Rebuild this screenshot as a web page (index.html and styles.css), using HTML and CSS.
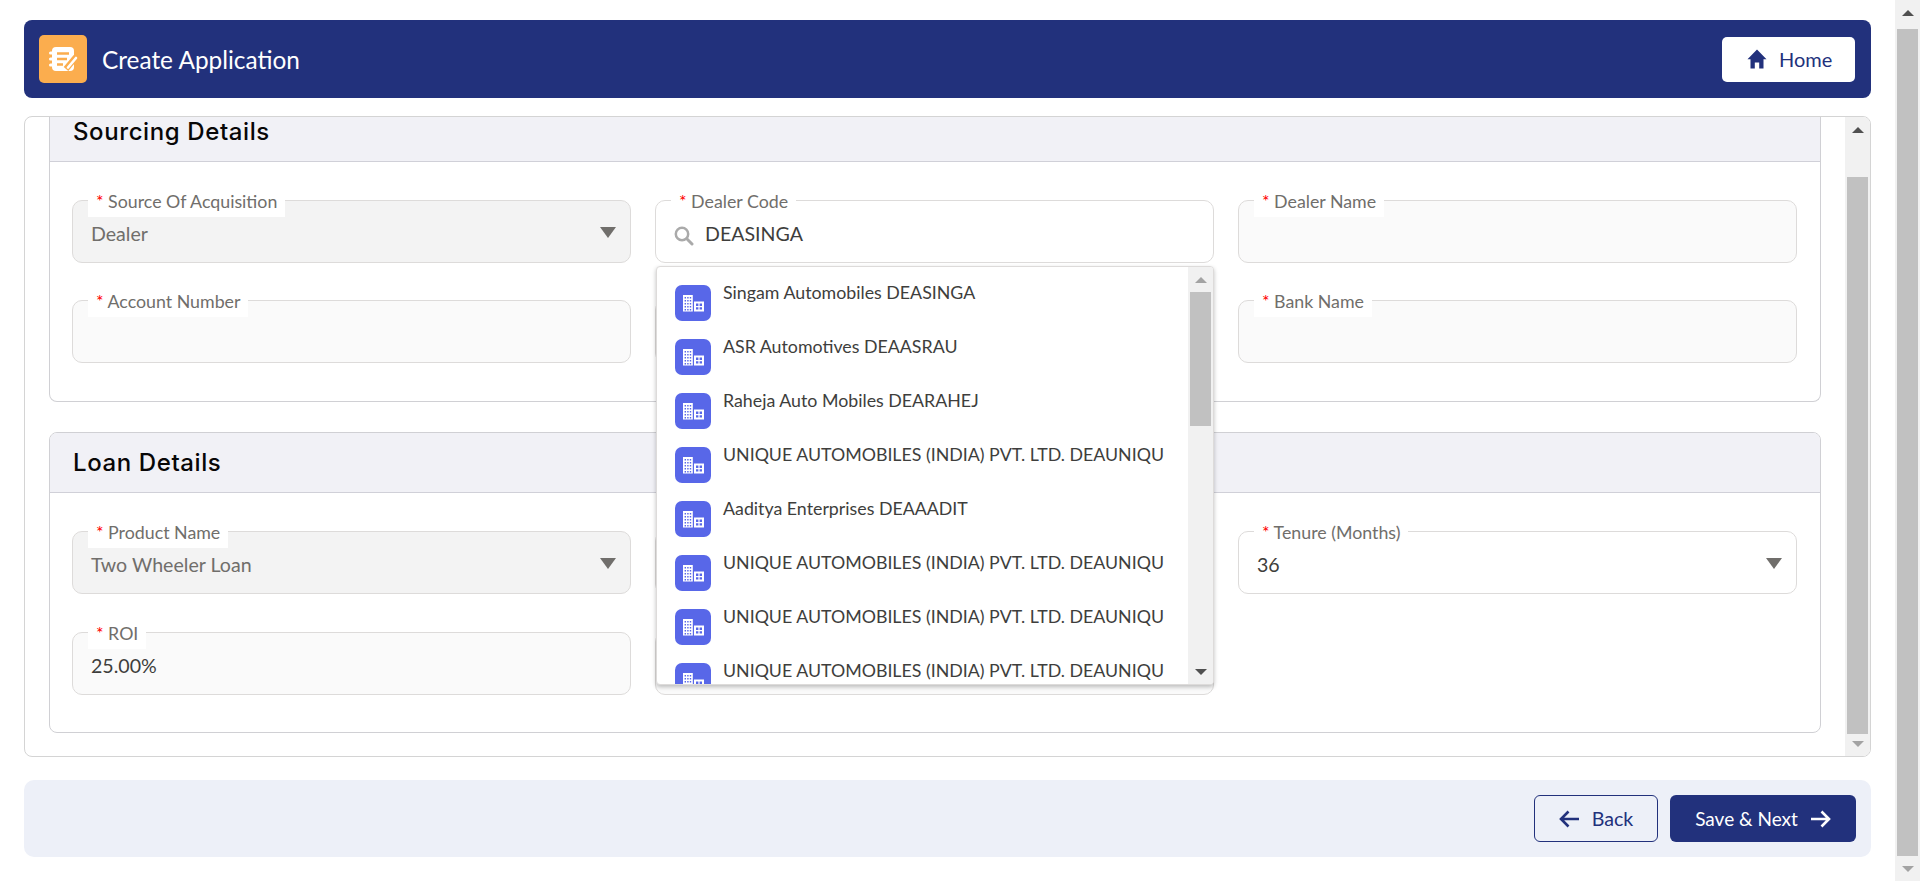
FILE: index.html
```html
<html lang="en">
<head>
	<meta charset="UTF-8">
	<title>Create Application</title>
	<link rel="stylesheet" href="styles.css">
</head>
<body>
	<svg class="defs" width="0" height="0">
		<symbol id="building" viewBox="0 0 36 36">
			<path fill="#fff" d="M8 10h9.800v16.600H8zM19 16.600h10v10H19z"/>
			<g fill="#5867e8">
				<path d="M9.600 12h1.400v1.400H9.600zM12.200 12h1.400v1.400h-1.400zM14.800 12h1.400v1.400h-1.400zM9.600 15h1.400v1.400H9.600zM12.200 15h1.400v1.400h-1.400zM14.800 15h1.400v1.400h-1.400zM9.600 18h1.400v1.400H9.600zM12.200 18h1.400v1.400h-1.400zM14.800 18h1.400v1.400h-1.400zM9.600 21h1.400v1.400H9.600zM12.200 21h1.400v1.400h-1.400zM14.800 21h1.400v1.400h-1.400zM9.600 24h1.400v1.400H9.600zM12.200 24h1.400v1.400h-1.400zM14.800 24h1.400v1.400h-1.400z"/>
				<path d="M21 18.600h2.400V21H21zM24.600 18.600H27V21h-2.400zM21 22.200h2.400v2.400H21zM24.600 22.200H27v2.400h-2.400z"/>
			</g>
		</symbol>
	</svg>

	<div class="page">
		<div class="topBar">
			<div class="titleWrap">
				<span class="appIcon">
					<svg width="48" height="48" viewBox="0 0 48 48">
						<rect x="13" y="12" width="22" height="24" rx="4" fill="#fff"/>
						<path stroke="#fff" stroke-width="3" stroke-linecap="round" d="M11.500 18h4M11.500 24h4M11.500 30h4"/>
						<path stroke="#fbad4e" stroke-width="2.400" d="M18 18.500h12M18 24h10M18 29.500h6"/>
						<path stroke="#fbad4e" stroke-width="6" d="M27 34l10-12"/>
						<path stroke="#fff" stroke-width="2.600" stroke-linecap="round" d="M29 32.500l8-9.500"/>
					</svg>
				</span>
				<span class="pageTitle">Create Application</span>
			</div>
			<a class="homeBtn">
				<svg width="20" height="20" viewBox="0 0 20 20"><path fill="#22317c" d="M10 0.500L0.500 10.200h3V19.500h4.300v-6h4.400v6h4.300V10.200h3z"/></svg>
				<span>Home</span>
			</a>
		</div>

		<div class="panel">
			<div class="panelBody">
				<div class="card cardCut">
					<div class="cardHead"><h2>Sourcing Details</h2></div>
					<div class="cardBody">
						<div class="field disabled select"><label><i>*</i> Source Of Acquisition</label><div class="val">Dealer</div></div>
						<div class="field open">
							<label><i>*</i> Dealer Code</label>
							<div class="val">
								<svg class="searchIco" width="20" height="20" viewBox="0 0 20 20"><circle cx="8" cy="8" r="6.200" fill="none" stroke="#aaa" stroke-width="2.500"/><path stroke="#aaa" stroke-width="3" stroke-linecap="round" d="M12.800 12.800l5.200 5.200"/></svg>
								<span>DEASINGA</span>
							</div>
							<div class="dropdown">
								<ul class="dropList">
									<li><svg class="bldIco"><use href="#building"/></svg><span>Singam Automobiles DEASINGA</span></li>
									<li><svg class="bldIco"><use href="#building"/></svg><span>ASR Automotives DEAASRAU</span></li>
									<li><svg class="bldIco"><use href="#building"/></svg><span>Raheja Auto Mobiles DEARAHEJ</span></li>
									<li><svg class="bldIco"><use href="#building"/></svg><span>UNIQUE AUTOMOBILES (INDIA) PVT. LTD. DEAUNIQU</span></li>
									<li><svg class="bldIco"><use href="#building"/></svg><span>Aaditya Enterprises DEAAADIT</span></li>
									<li><svg class="bldIco"><use href="#building"/></svg><span>UNIQUE AUTOMOBILES (INDIA) PVT. LTD. DEAUNIQU</span></li>
									<li><svg class="bldIco"><use href="#building"/></svg><span>UNIQUE AUTOMOBILES (INDIA) PVT. LTD. DEAUNIQU</span></li>
									<li><svg class="bldIco"><use href="#building"/></svg><span>UNIQUE AUTOMOBILES (INDIA) PVT. LTD. DEAUNIQU</span></li>
								</ul>
								<div class="sBar sDrop">
									<b class="arr up light"></b>
									<div class="sSpace"><div class="thumb"></div></div>
									<b class="arr down"></b>
								</div>
							</div>
						</div>
						<div class="field readonly"><label><i>*</i> Dealer Name</label><div class="val"></div></div>
						<div class="field readonly"><label><i>*</i> Account Number</label><div class="val"></div></div>
						<div class="field readonly"><div class="val"></div></div>
						<div class="field readonly"><label><i>*</i> Bank Name</label><div class="val"></div></div>
					</div>
				</div>

				<div class="card">
					<div class="cardHead tall"><h2>Loan Details</h2></div>
					<div class="cardBody">
						<div class="field disabled select"><label><i>*</i> Product Name</label><div class="val">Two Wheeler Loan</div></div>
						<div class="field readonly"><div class="val"></div></div>
						<div class="field select"><label><i>*</i> Tenure (Months)</label><div class="val">36</div></div>
						<div class="field readonly"><label><i>*</i> ROI</label><div class="val">25.00%</div></div>
						<div class="field readonly"><div class="val"></div></div>
					</div>
				</div>
			</div>
			<div class="sBar sPanel">
				<b class="arr up"></b>
				<div class="sSpace"><div class="thumb"></div></div>
				<b class="arr down light"></b>
			</div>
		</div>

		<div class="footBar">
			<a class="btn btnOutline">
				<svg width="20" height="18" viewBox="0 0 20 18"><path fill="none" stroke="#22317c" stroke-width="2.600" d="M20 9H2M9.500 1.500L2 9l7.500 7.500"/></svg>
				<span>Back</span>
			</a>
			<a class="btn btnFill">
				<span>Save &amp; Next</span>
				<svg width="20" height="18" viewBox="0 0 20 18"><path fill="none" stroke="#fff" stroke-width="2.600" d="M0 9h18M10.500 1.500L18 9l-7.500 7.500"/></svg>
			</a>
		</div>
	</div>

	<div class="sBar sPage">
		<b class="arr up"></b>
		<div class="sSpace"><div class="thumb"></div></div>
		<b class="arr down light"></b>
	</div>
</body>
</html>
```

FILE: styles.css
```css
*{
	margin: 0px;
	padding: 0px;
	box-sizing: border-box;
	list-style: none;
}

body{
	display: flex;
	height: 881px;
	overflow: hidden;
	background: #fff;
	font-family: "Lato", "Liberation Sans", sans-serif;
	color: #3e3e3c;
}

.defs{
	position: absolute;
}

.page{
	flex: 1;
	min-width: 0;
	padding: 20px 24px 24px;
	display: flex;
	flex-direction: column;
}

/* top bar */
.topBar{
	height: 78px;
	flex: none;
	background: #22317c;
	border-radius: 8px;
	padding: 0 16px 0 15px;
	display: flex;
	align-items: center;
	justify-content: space-between;
}
.titleWrap{
	display: flex;
	align-items: center;
	gap: 15px;
}
.appIcon{
	width: 48px;
	height: 48px;
	background: #fbad4e;
	border-radius: 5px;
	display: block;
}
.appIcon svg{
	display: block;
}
.pageTitle{
	color: #fff;
	font-size: 24.400px;
}
.homeBtn{
	width: 133px;
	height: 45px;
	background: #fff;
	border-radius: 5px;
	color: #22317c;
	font-size: 20px;
	display: flex;
	align-items: center;
	padding-left: 25px;
	gap: 12px;
}

/* scroll panel */
.panel{
	flex: none;
	height: 641px;
	margin-top: 18px;
	border: 1px solid #d4d4d4;
	border-radius: 8px;
	display: flex;
	overflow: hidden;
}
.panelBody{
	flex: 1;
	min-width: 0;
	padding: 0 24px;
}

.card{
	border: 1px solid #d0d0d4;
	border-radius: 8px;
	margin-top: 30px;
}
.card.cardCut{
	margin-top: 0;
	border-top: 0;
	border-radius: 0 0 8px 8px;
}
.cardCut .cardBody{
	row-gap: 37px;
	padding-bottom: 38px;
}
.cardHead{
	height: 45px;
	background: #f1f1f6;
	border-bottom: 1px solid #d0d0d8;
	padding: 0 0 16px 23px;
	display: flex;
	align-items: center;
}
.cardHead.tall{
	height: 60px;
	padding-bottom: 0;
	border-radius: 7px 7px 0 0;
}
.cardHead h2{
	font-family: "Inter", "Noto Sans", sans-serif;
	font-weight: 500;
	font-size: 24px;
	letter-spacing: .6px;
	color: #080707;
}
.cardBody{
	padding: 38px 23px 37px 22px;
	display: grid;
	grid-template-columns: repeat(3, 1fr);
	column-gap: 24px;
	row-gap: 38px;
}

/* form fields */
.field{
	position: relative;
	height: 63px;
	border: 1px solid #dddbda;
	border-radius: 10px;
	background: #fff;
}
.field label{
	position: absolute;
	left: 15px;
	top: -11px;
	height: 27px;
	padding: 0 8px 0 8px;
	background: #fff;
	line-height: 22px;
	font-size: 17.800px;
	color: #706e6b;
	white-space: nowrap;
}
.field label i{
	color: #f00;
	font-style: normal;
}
.val{
	height: 100%;
	padding: 4px 18px 0;
	display: flex;
	align-items: center;
	gap: 11px;
	font-size: 19.600px;
}
.field.disabled{
	background: #f3f3f3;
}
.field.disabled .val{
	color: #706e6b;
}
.field.readonly{
	background: #fafafa;
}
.field.select::after{
	content: "";
	position: absolute;
	right: 14px;
	top: 26px;
	border-left: 8px solid transparent;
	border-right: 8px solid transparent;
	border-top: 11px solid #706e6b;
}
.searchIco{
	flex: none;
	margin-top: 5px;
}
.field.open{
	z-index: 2;
}

/* dealer search results */
.dropdown{
	position: absolute;
	left: 0;
	right: -1px;
	top: 65px;
	height: 419px;
	background: #fff;
	border: 1px solid #dddbda;
	border-radius: 4px;
	box-shadow: 0 2px 4px rgba(0,0,0,.25);
	display: flex;
	overflow: hidden;
}
.dropList{
	flex: 1;
	min-width: 0;
	padding: 18px 0 0 18px;
}
.dropList li{
	height: 54px;
	display: flex;
	gap: 12px;
	font-size: 17.800px;
	line-height: 20px;
	white-space: nowrap;
}
.dropList li span{
	margin-top: -3px;
}
.bldIco{
	width: 36px;
	height: 36px;
	flex: none;
	background: #5867e8;
	border-radius: 7px;
}

/* drawn scrollbars */
.sBar{
	flex: none;
	width: 25px;
	background: #f1f1f1;
	display: flex;
	flex-direction: column;
	align-items: center;
}
.sSpace{
	flex: 1;
	width: 100%;
	min-height: 0;
}
.thumb{
	background: #c1c1c1;
	margin: 0 2px;
	height: 100%;
}
.arr{
	display: block;
	flex: none;
	width: 0;
	height: 0;
	border-left: 6px solid transparent;
	border-right: 6px solid transparent;
}
.arr.up{
	border-bottom: 6px solid #505050;
}
.arr.down{
	border-top: 6px solid #505050;
}
.arr.up.light{
	border-bottom-color: #a3a3a3;
}
.arr.down.light{
	border-top-color: #a3a3a3;
}
.sPage{
	height: 881px;
}
.sPage .arr.up{
	margin: 10px 0 13px;
}
.sPage .arr.down{
	margin: 10px 0 9px;
}
.sPanel{
	height: 100%;
}
.sPanel .arr.up{
	margin: 10px 0 44px;
}
.sPanel .arr.down{
	margin: 7px 0 9px;
}
.sDrop .arr.up{
	margin: 10px 0 9px;
}
.sDrop .thumb{
	height: 134px;
}
.sDrop .arr.down{
	margin: 0 0 9px;
}

/* bottom bar */
.footBar{
	flex: none;
	height: 77px;
	margin-top: 23px;
	background: #edf0f8;
	border-radius: 10px;
	padding: 0 15px;
	display: flex;
	align-items: center;
	justify-content: flex-end;
	gap: 12px;
}
.btn{
	height: 47px;
	border-radius: 6px;
	font-size: 19.600px;
	display: flex;
	align-items: center;
	justify-content: center;
	gap: 13px;
}
.btnOutline{
	width: 124px;
	border: 1px solid #22317c;
	color: #22317c;
}
.btnFill{
	width: 186px;
	background: #22317c;
	color: #fff;
	font-size: 19px;
}
```
